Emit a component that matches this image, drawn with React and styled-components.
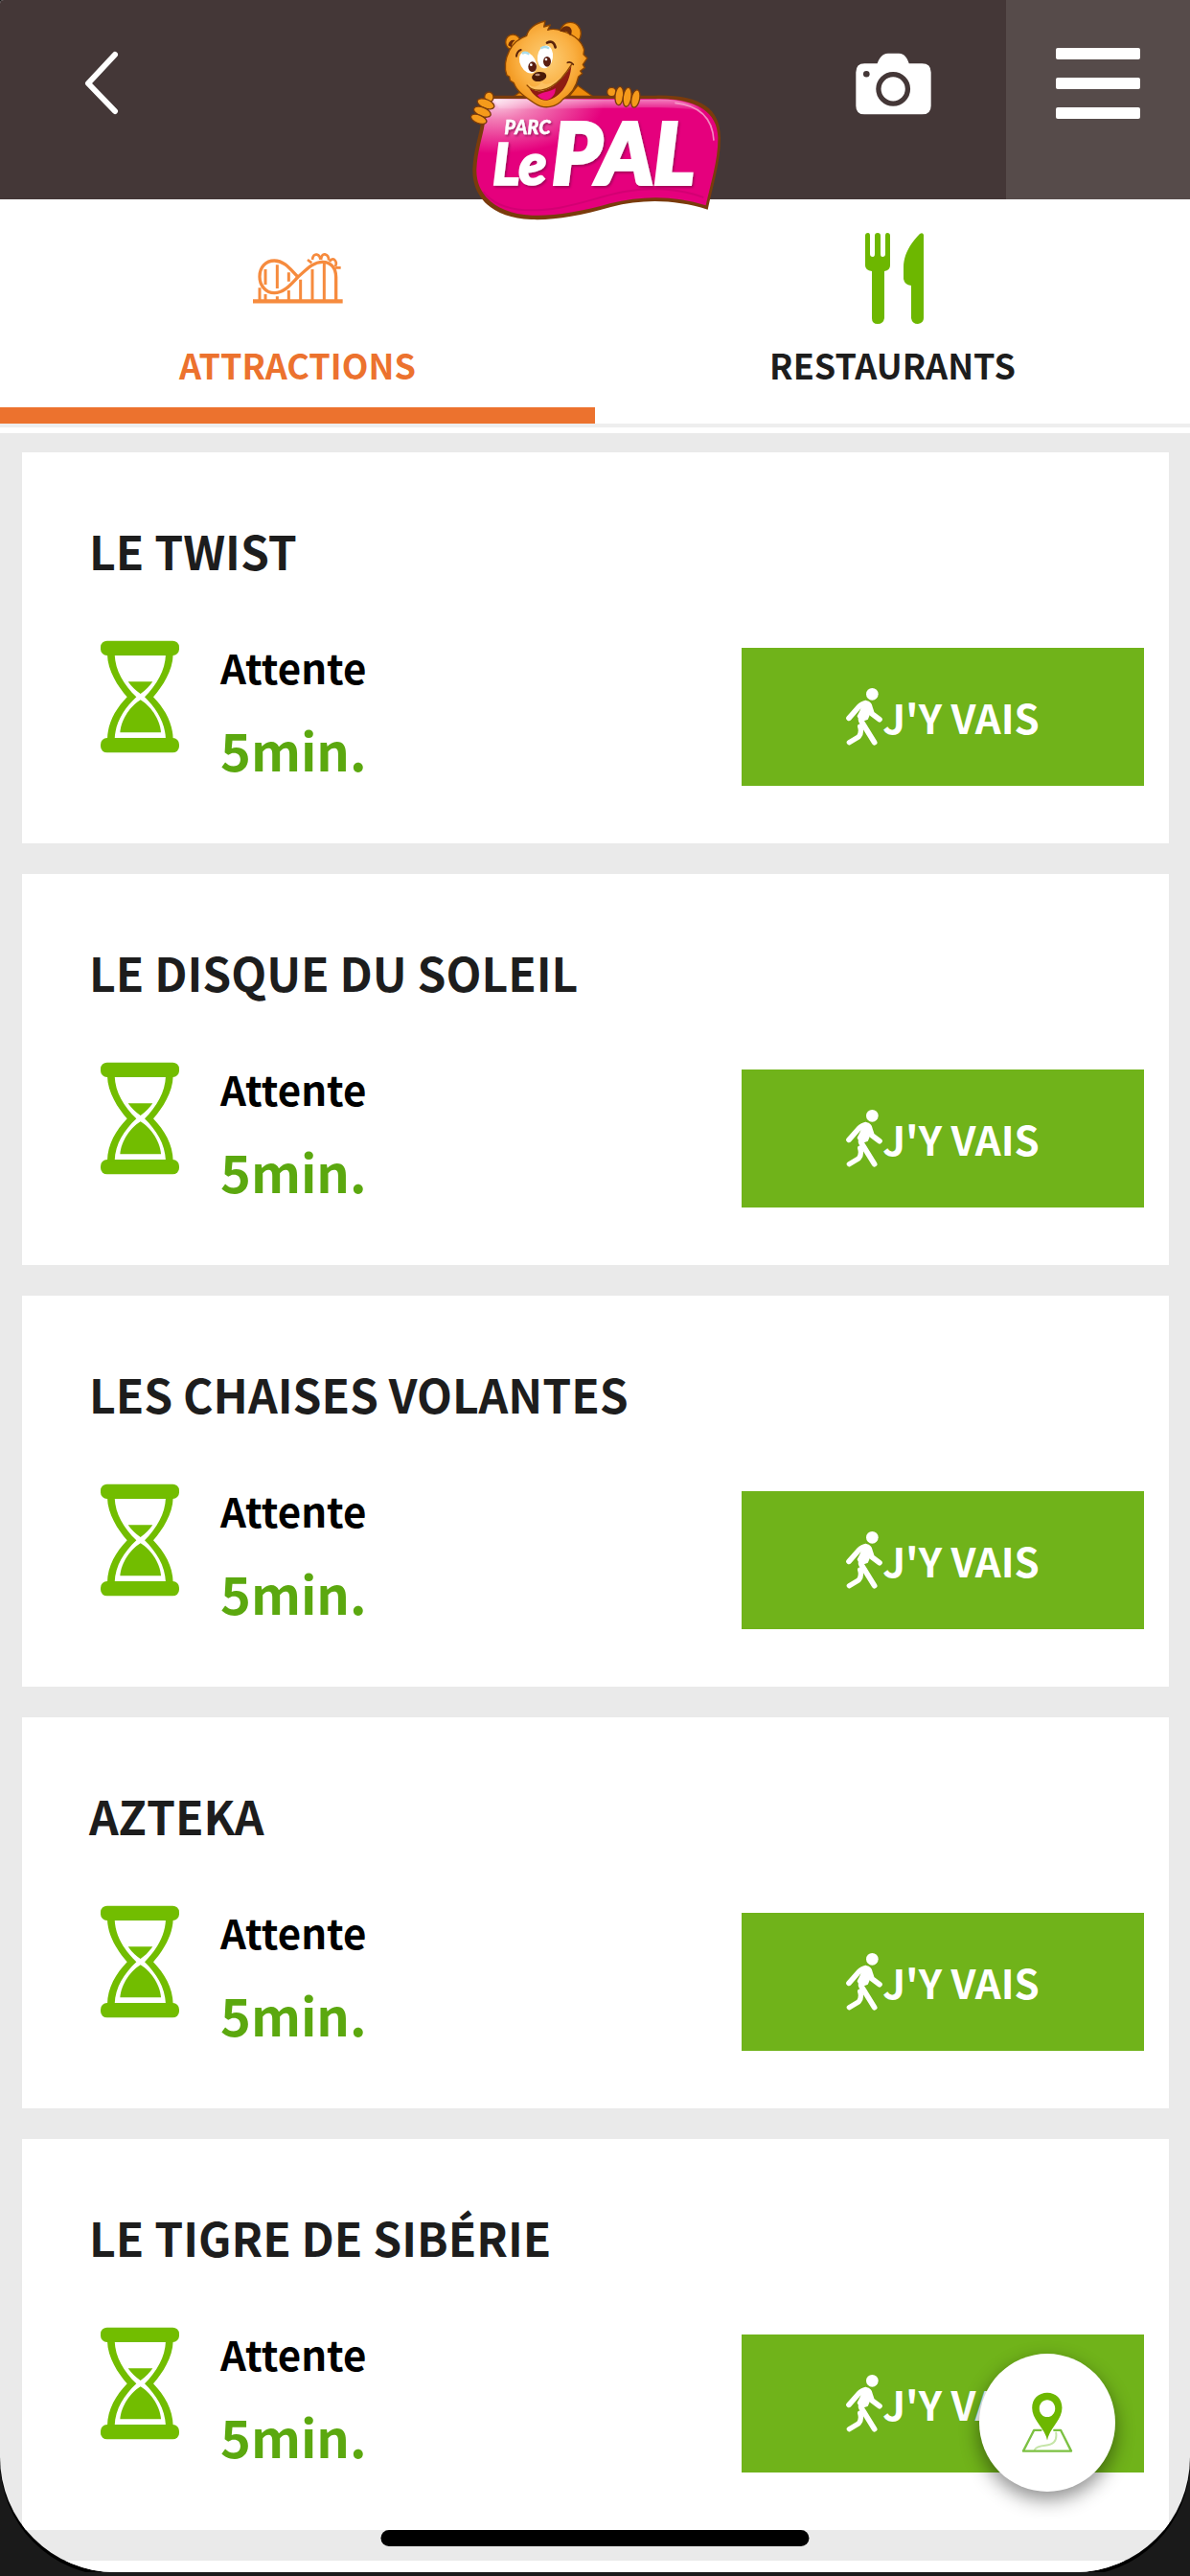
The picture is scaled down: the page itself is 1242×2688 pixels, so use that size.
import React from "react";
import styled, { createGlobalStyle } from "styled-components";

const GlobalStyle = createGlobalStyle`
  body {
    margin: 0;
    background: #1a1a1a;
    font-family: "Noto Sans CJK SC", sans-serif;
    font-weight: bold;
  }
`

const Screen = styled.div`
  position: relative;
  display: flex;
  flex-direction: column;
  height: calc(100vh - 4px);
  overflow: hidden;
  background: #eaeaea;
  border-radius: 4px 0 120px 120px;
  box-shadow: 0 4px 0 #000;
`

const Header = styled.header`
  position: relative;
  z-index: 1;
  display: grid;
  grid-template-columns: 1fr 300px 1fr;
  grid-template-rows: 208px;
  flex-shrink: 0;
  height: 208px;
  background: #443737;
`

const HeaderButton = styled.button`
  display: flex;
  align-items: center;
  justify-content: center;
  width: ${props => props.$width}px;
  padding: 0 0 34px;
  border: none;
  background: ${props => props.$light ? "#564b4a" : "none"};
`

const HeaderActions = styled.div`
  display: flex;
  justify-content: flex-end;
`

const LogoLink = styled.a`
  display: block;
  height: 240px;
`

const Tabs = styled.nav`
  display: grid;
  grid-template-columns: 1fr 1fr;
  flex-shrink: 0;
  padding-bottom: 10px;
  background: #fff;
`

const Tab = styled.a`
  display: flex;
  flex-direction: column;
  align-items: center;
  padding: 34px 0 23px;
  border-bottom: 17px solid ${props => props.$active ? "#ec722e" : "#fff"};
  box-shadow: 0 4px 0 #eee;
  color: ${props => props.$active ? "#ec722e" : "#1d1d1d"};
  font-size: 36px;
  line-height: 44px;
  text-decoration: none;
`

const TabIcon = styled.span`
  display: flex;
  align-items: center;
  height: 96px;
  margin-bottom: 20px;
`

const List = styled.main`
  display: flex;
  flex-direction: column;
  flex: 1;
  gap: 32px;
  min-height: 0;
  padding: 20px 22px 0 23px;
  overflow: hidden;
`

const Card = styled.article`
  flex-shrink: 0;
  padding: 70px 26px 60px 70px;
  background: #fff;
`

const CardTitle = styled.h2`
  margin: 0 0 62px;
  color: #1d1d1d;
  font-size: 48px;
  line-height: 64px;
`

const CardRow = styled.div`
  display: flex;
  align-items: flex-start;
  padding-left: 12px;
`

const Wait = styled.div`
  display: flex;
  flex-direction: column;
  flex: 1;
  gap: 26px;
  margin-left: 43px;
`

const WaitLabel = styled.span`
  color: #000;
  font-size: 42px;
  line-height: 56px;
`

const WaitTime = styled.span`
  color: #5ba80f;
  font-size: 54px;
  line-height: 64px;
`

const GoButton = styled.button`
  display: flex;
  align-items: center;
  justify-content: center;
  width: 420px;
  height: 144px;
  margin-top: 8px;
  padding: 0;
  border: none;
  background: #70b31a;
  color: #fff;
  font: inherit;
  font-size: 42px;
  line-height: 56px;
`

const MapButton = styled.button`
  position: absolute;
  right: 78px;
  bottom: 84px;
  display: flex;
  align-items: center;
  justify-content: center;
  width: 142px;
  height: 144px;
  padding: 0;
  border: none;
  border-radius: 50%;
  background: #fff;
  box-shadow: 0 8px 20px rgba(0, 0, 0, 0.45);
`

const HomeIndicator = styled.div`
  position: absolute;
  bottom: 27px;
  left: 50%;
  width: 36%;
  height: 17px;
  border-radius: 9px;
  background: #000;
  transform: translateX(-50%);
`

const BackIcon = () => (
    <svg width="36" height="70" viewBox="0 0 36 70" fill="none" stroke="#fff" strokeWidth="6" strokeLinecap="round" strokeLinejoin="round">
        <path d="M32 5 L4 35 L32 64"/>
    </svg>
)

const CameraIcon = () => (
    <svg width="79" height="65" viewBox="218 160 238 194" fill="#fff">
        <path d="M246 193 H286 C292 178 301 161 320 161 H354 C373 161 381 178 386 193 H427 Q455 193 455 221 V326 Q455 353 427 353 H246 Q219 353 219 326 V221 Q219 193 246 193 Z"/>
        <circle cx="336" cy="273" r="46" fill="none" stroke="#443737" strokeWidth="16"/>
        <circle cx="252" cy="226" r="10" fill="#443737"/>
    </svg>
)

const MenuIcon = () => (
    <svg width="88" height="74" viewBox="0 0 88 74" fill="#fff">
        <rect width="88" height="12" rx="2"/>
        <rect y="31" width="88" height="12" rx="2"/>
        <rect y="62" width="88" height="12" rx="2"/>
    </svg>
)

const CoasterIcon = () => (
    <svg width="94" height="54" viewBox="40 36 282 162" fill="none" stroke="#f68b3e" strokeWidth="10">
        <path d="M40 190 H321" strokeWidth="13"/>
        <path d="M300 188 V115 C300 86 284 67 258 67 C226 67 205 94 181 114 C160 136 138 164 107 164 C80 164 61 140 61 113 C61 84 80 63 107 63 C140 63 160 94 181 114"/>
        <path d="M116 76 V150 M189 122 V188 M226 90 V188 M263 72 V188 M61 148 V188 M152 156 V188" strokeWidth="9"/>
        <path d="M79 90 V138 M152 100 V128 M79 168 V188 M116 175 V188" strokeWidth="9"/>
        <path d="M211 60 L224 70 M226 60 Q228 42 240 44 Q250 46 251 60 M253 60 Q255 42 265 43 Q278 46 277 62 M280 66 Q287 55 295 60 Q304 67 298 82 M298 85 H315" strokeWidth="8"/>
    </svg>
)

const CutleryIcon = () => (
    <svg width="65" height="95" viewBox="-4 0 65 95" fill="#6db700">
        <path d="M0 3 Q0 0 3 0 Q5 0 5 3 V22 Q5 25 8 25 Q10 25 10 22 V3 Q10 0 13 0 Q16 0 16 3 V22 Q16 25 18 25 Q21 25 21 22 V3 Q21 0 23 0 Q26 0 26 3 V34 Q26 39 20 40 V89 Q19 95 13 95 Q7 95 7 89 V40 Q0 39 0 34 Z"/>
        <path d="M61 2 Q60 -1 57 1 C46 12 40 24 40 36 V48 Q41 54 48 55 V89 Q49 95 55 95 Q61 94 61 89 Z"/>
    </svg>
)

const HourglassIcon = () => (
    <svg width="82" height="118" viewBox="44 54 246 354" fill="#72bd00">
        <rect x="44" y="56" width="246" height="46" rx="20"/>
        <rect x="44" y="360" width="246" height="46" rx="20"/>
        <path d="M65 98 C66 150 98 198 127 232 C92 268 66 312 65 364 H88 C90 310 118 268 156 232 C116 192 90 150 88 98 Z"/>
        <path d="M271 98 C270 150 238 198 209 232 C244 268 270 312 271 364 H248 C246 310 218 268 182 232 C220 192 246 150 248 98 Z"/>
        <path d="M130 184 H207 Q190 208 169 222 Q147 208 130 184 Z"/>
        <path d="M105 343 C108 300 140 258 169 241 C198 258 230 300 233 343 Z"/>
    </svg>
)

const WalkIcon = () => (
    <svg width="38" height="62" viewBox="426 229 114 186" fill="none" stroke="#fff" strokeWidth="17" strokeLinecap="round" strokeLinejoin="round">
        <circle cx="508" cy="251" r="19" fill="#fff" stroke="none"/>
        <path d="M435 326 L465 292 Q476 281 488 279 Q499 281 500 291 L507 312 L531 330"/>
        <path d="M484 282 L504 300 L492 328 L474 334 L464 320 Z" fill="#fff" strokeWidth="6"/>
        <path d="M480 300 L474 322 Q470 332 477 341 L515 402"/>
        <path d="M470 352 Q476 372 466 384 L436 402" strokeWidth="16"/>
    </svg>
)

const MapPinIcon = () => (
    <svg width="54" height="64" viewBox="256 283 164 194" fill="none" stroke="#7cc142" strokeWidth="7" strokeLinecap="round" strokeLinejoin="round">
        <path d="M366 412 C370 442 354 450 332 452 C312 454 302 458 298 466" stroke="#c5e5a8" strokeWidth="6"/>
        <path d="M318 404 H296 L262 470 H414 L381 404 H360"/>
        <path d="M338 436 C330 396 290 372 290 333 C290 304 311 285 338 285 C365 285 385 304 385 333 C385 372 346 396 338 436 Z M338 308 C324 308 313 320 313 335 C313 350 324 362 338 362 C352 362 363 350 363 335 C363 320 352 308 338 308 Z" fill="#6db700" fillRule="evenodd" stroke="none"/>
    </svg>
)

const LogoText = styled.text`
  fill: #fff;
  stroke: #fff;
  stroke-width: ${props => props.$weight};
  font-family: Lato, sans-serif;
  font-size: ${props => props.$size}px;
  font-style: italic;
  font-weight: 900;
`

const Logo = () => (
    <svg width="300" height="240" viewBox="0 0 900 720">
        <defs>
            <radialGradient id="fur" cx="0.5" cy="0.45" r="0.6">
                <stop offset="0" stopColor="#fdd07a"/>
                <stop offset="0.55" stopColor="#fab043"/>
                <stop offset="1" stopColor="#ee8a0a"/>
            </radialGradient>
            <radialGradient id="shine" cx="0.08" cy="0.02" r="0.45">
                <stop offset="0" stopColor="#fbd3e6"/>
                <stop offset="0.35" stopColor="#f27cb5"/>
                <stop offset="1" stopColor="#e5007d"/>
            </radialGradient>
            <linearGradient id="topShine" x1="0" y1="0" x2="0" y2="1">
                <stop offset="0" stopColor="#fff" stopOpacity="0.5"/>
                <stop offset="1" stopColor="#fff" stopOpacity="0"/>
            </linearGradient>
            <filter id="textShadow">
                <feDropShadow dx="4" dy="5" stdDeviation="3" floodColor="#7d0046" floodOpacity="0.7"/>
            </filter>
        </defs>
        {/* shoulders behind the sign */}
        <path d="M190 306 L212 290 L370 300 L396 268 L446 304 Z" fill="#ee8a0a" stroke="#8a4300" strokeWidth="4"/>
        {/* sign */}
        <path d="M118 299 H640 C780 296 842 340 843 430 C844 500 820 580 803 656 C700 624 600 622 500 648 C400 676 320 690 250 687 C130 682 65 620 67 530 C70 470 86 430 92 390 C97 350 104 320 118 299 Z" fill="#7a3b0c"/>
        <path d="M130 309 H640 C765 306 834 350 835 430 C836 500 812 575 797 643 C700 612 600 611 497 637 C400 664 320 677 252 674 C140 668 77 610 79 530 C82 470 98 430 104 390 C108 352 115 325 130 309 Z" fill="url(#shine)"/>
        <path d="M132 311 H640 C720 309 770 326 790 350 C700 325 500 345 150 340 Z" fill="url(#topShine)"/>
        <path d="M700 322 C780 330 818 370 822 440" fill="none" stroke="#f9a8cf" strokeWidth="5" opacity="0.8"/>
        <path d="M100 600 C150 665 250 665 340 650 C450 630 520 590 640 592 C720 594 760 608 790 618" fill="none" stroke="#c10069" strokeWidth="6" opacity="0.5"/>
        <g filter="url(#textShadow)">
            <LogoText x="166" y="419" $size={60} $weight={1}>PARC</LogoText>
            <LogoText x="128" y="578" $size={180} $weight={5}>Le</LogoText>
            <LogoText x="316" y="576" $size={264} $weight={12}>PAL</LogoText>
        </g>
        {/* bear */}
        <g stroke="#8a4300" strokeWidth="4" strokeLinejoin="round">
            <ellipse cx="193" cy="132" rx="23" ry="24" fill="#f59a1b"/>
            <ellipse cx="373" cy="105" rx="33" ry="35" fill="#f59a1b"/>
            <path d="M182 158 C166 190 166 215 174 236 L182 240 L184 252 L196 260 C204 285 232 304 262 324 C292 344 330 336 350 310 C372 298 390 278 398 240 L410 230 L404 222 L418 212 L412 202 L426 182 L414 170 L416 156 C408 126 380 108 350 98 C330 90 312 90 302 94 L310 78 L290 84 L294 66 C262 72 240 92 236 112 C212 120 192 138 182 158 Z" fill="url(#fur)"/>
        </g>
        <path d="M178 142 Q182 122 200 126 Q190 132 188 148 Z" fill="#6b2c0a"/>
        <path d="M340 98 Q352 76 370 84 Q384 96 372 112 Q364 94 352 100 Z" fill="#6b2c0a"/>
        <g fill="none" stroke="#5a230a" strokeLinecap="round">
            <path d="M204 176 Q206 160 218 156" strokeWidth="6"/>
            <path d="M300 134 Q320 124 326 148" strokeWidth="8"/>
            <path d="M364 196 Q374 192 382 202" strokeWidth="5"/>
        </g>
        <ellipse cx="240" cy="196" rx="24" ry="36" fill="#fff" transform="rotate(-28 240 196)"/>
        <ellipse cx="294" cy="178" rx="24" ry="36" fill="#fff" transform="rotate(8 294 178)"/>
        <path d="M222 168 Q232 160 244 170 M280 152 Q294 142 306 152" fill="none" stroke="#a9dcea" strokeWidth="7"/>
        <ellipse cx="254" cy="209" rx="13" ry="16" fill="#5a1d10"/>
        <ellipse cx="300" cy="193" rx="12" ry="16" fill="#5a1d10"/>
        <circle cx="250" cy="203" r="4" fill="#fff"/>
        <circle cx="297" cy="186" r="4" fill="#fff"/>
        <path d="M244 276 C285 296 340 262 376 206 C372 256 345 306 300 314 C278 316 256 298 244 276 Z" fill="#8f1c12"/>
        <path d="M270 298 C290 286 310 288 326 276 C328 296 312 312 296 313 C284 313 276 306 270 298 Z" fill="#ec0b82"/>
        <path d="M240 258 C250 280 278 272 282 254 C296 278 340 250 368 216 C340 262 300 286 274 286 C258 284 246 278 240 258 Z" fill="#fcc062"/>
        <path d="M236 266 C256 290 300 292 344 246 Q362 226 378 200" fill="none" stroke="#8a4300" strokeWidth="4"/>
        <ellipse cx="275" cy="240" rx="23" ry="15" fill="#4a1a08" transform="rotate(-10 275 240)"/>
        <ellipse cx="270" cy="234" rx="8" ry="4" fill="#b98a74"/>
        <g fill="#f59a1b" stroke="#7a3b0c" strokeWidth="4">
            <ellipse cx="118" cy="304" rx="14" ry="16"/>
            <ellipse cx="108" cy="325" rx="28" ry="14" transform="rotate(22 108 325)"/>
            <ellipse cx="97" cy="350" rx="28" ry="14" transform="rotate(22 97 350)"/>
            <ellipse cx="86" cy="373" rx="26" ry="13" transform="rotate(22 86 373)"/>
            <ellipse cx="502" cy="288" rx="14" ry="14"/>
            <ellipse cx="526" cy="300" rx="13" ry="29" transform="rotate(6 526 300)"/>
            <ellipse cx="551" cy="304" rx="13" ry="30" transform="rotate(8 551 304)"/>
            <ellipse cx="577" cy="309" rx="13" ry="28" transform="rotate(12 577 309)"/>
        </g>
    </svg>
)

const attractions = [
    { name: "LE TWIST", wait: 5 },
    { name: "LE DISQUE DU SOLEIL", wait: 5 },
    { name: "LES CHAISES VOLANTES", wait: 5 },
    { name: "AZTEKA", wait: 5 },
    { name: "LE TIGRE DE SIBÉRIE", wait: 5 },
]

const AttractionCard = ({ name, wait }) => (
    <Card>
        <CardTitle>{name}</CardTitle>
        <CardRow>
            <HourglassIcon/>
            <Wait>
                <WaitLabel>Attente</WaitLabel>
                <WaitTime>{wait}min.</WaitTime>
            </Wait>
            <GoButton type="button">
                <WalkIcon/>
                J'Y VAIS
            </GoButton>
        </CardRow>
    </Card>
)

const App = () => (
    <Screen>
        <GlobalStyle/>
        <Header>
            <HeaderButton type="button" aria-label="Retour" $width={212}>
                <BackIcon/>
            </HeaderButton>
            <LogoLink href="#" aria-label="Parc Le Pal">
                <Logo/>
            </LogoLink>
            <HeaderActions>
                <HeaderButton type="button" aria-label="Photo" $width={236}>
                    <CameraIcon/>
                </HeaderButton>
                <HeaderButton type="button" aria-label="Menu" $width={192} $light>
                    <MenuIcon/>
                </HeaderButton>
            </HeaderActions>
        </Header>
        <Tabs>
            <Tab href="#attractions" $active>
                <TabIcon><CoasterIcon/></TabIcon>
                ATTRACTIONS
            </Tab>
            <Tab href="#restaurants">
                <TabIcon><CutleryIcon/></TabIcon>
                RESTAURANTS
            </Tab>
        </Tabs>
        <List>
            {attractions.map(item => (
                <AttractionCard key={item.name} name={item.name} wait={item.wait}/>
            ))}
            <Card/>
        </List>
        <MapButton type="button" aria-label="Plan du parc">
            <MapPinIcon/>
        </MapButton>
        <HomeIndicator/>
    </Screen>
)

export default App
